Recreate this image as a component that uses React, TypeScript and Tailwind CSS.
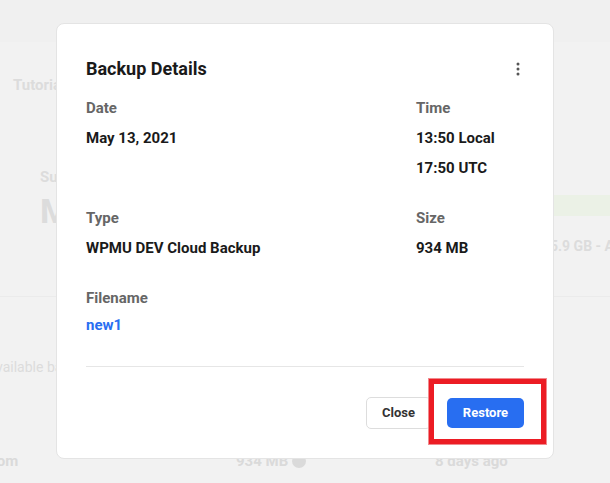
import React from "react";

const faint = "text-[#dcdcdc]";

function BackgroundPage() {
  return (
    <div className="flex flex-col w-full h-full">
      <div className="h-[42px] bg-[#f0f0f0] shrink-0" />
      <div className={`pl-[13px] mt-[33px] text-[15px] font-bold leading-[20px] ${faint}`}>Tutorials</div>
      <div className="flex mt-[72px]">
        <div className="pl-[40px] w-[554px] shrink-0">
          <div className={`text-[15px] font-bold leading-[20px] ${faint}`}>Summary</div>
          <div className={`text-[34px] font-bold leading-[40px] mt-[4px] ${faint}`}>May</div>
        </div>
        <div className="flex flex-col pt-[28px]">
          <div className="h-[21px] w-[60px] bg-[#ebf1e6]" />
          <div className={`mt-[20px] -ml-[4px] text-[14px] font-bold leading-[20px] whitespace-nowrap ${faint}`}>5.9 GB - Available</div>
        </div>
      </div>
      <div className="mt-[40px] h-px bg-[#ebebeb]" />
      <div className={`mt-[60px] -ml-[4px] text-[14px] leading-[20px] whitespace-nowrap ${faint}`}>vailable backups</div>
      <div className="grid grid-cols-[236px_199px_1fr] mt-[74px] text-[15px] font-bold leading-[20px] text-[#dadada]">
        <div className="-ml-[11px]">com</div>
        <div className="flex items-center gap-[4px]">
          934 MB
          <span className="w-[14px] h-[14px] rounded-full bg-[#dadada]" />
        </div>
        <div>8 days ago</div>
      </div>
    </div>
  );
}

function Field({ label, children }: { label: string; children: React.ReactNode }) {
  return (
    <div className="flex flex-col">
      <div className="text-[15px] font-bold leading-[20px] text-[#666666]">{label}</div>
      <div className="mt-[10px] flex flex-col gap-[10px] text-[15px] font-bold leading-[20px] text-[#1a1a1a]">
        {children}
      </div>
    </div>
  );
}

export default function App() {
  return (
    <div
      className="relative w-[610px] h-[483px] overflow-hidden bg-[#f2f2f2]"
      style={{ fontFamily: "Roboto, 'Noto Sans', sans-serif" }}
    >
      <BackgroundPage />

      {/* Modal */}
      <div className="absolute left-[56px] top-[23px] w-[498px] h-[436px] bg-white rounded-[8px] border border-[#e4e4e4] px-[29px] pt-[33px] pb-[29px] flex flex-col">
        <div className="flex items-center justify-between">
          <h2 className="text-[18px] font-bold leading-[24px] text-[#1a1a1a]">Backup Details</h2>
          <button type="button" className="w-[16px] h-[24px] flex items-center justify-center -mr-[2px]">
            <svg width="4" height="14" viewBox="0 0 4 14">
              <circle cx="2" cy="2" r="1.5" fill="#555" />
              <circle cx="2" cy="7" r="1.5" fill="#555" />
              <circle cx="2" cy="12" r="1.5" fill="#555" />
            </svg>
          </button>
        </div>

        <div className="grid grid-cols-[330px_1fr] gap-y-[30px] mt-[17px]">
          <Field label="Date">
            <div>May 13, 2021</div>
          </Field>
          <Field label="Time">
            <div>13:50 Local</div>
            <div>17:50 UTC</div>
          </Field>
          <Field label="Type">
            <div>WPMU DEV Cloud Backup</div>
          </Field>
          <Field label="Size">
            <div>934 MB</div>
          </Field>
          <div className="flex flex-col">
            <div className="text-[15px] font-bold leading-[20px] text-[#666666]">Filename</div>
            <a className="mt-[7px] text-[15px] font-bold leading-[20px] text-[#286ef1]">new1</a>
          </div>
        </div>

        <div className="mt-[31px] h-px bg-[#e6e6e6]" />

        <div className="mt-[30px] flex items-center justify-end gap-[16px]">
          <button
            type="button"
            className="h-[32px] w-[65px] rounded-[5px] border border-[#dddddd] bg-white text-[13px] font-bold text-[#333333]"
          >
            Close
          </button>
          <button
            type="button"
            className="h-[30px] w-[77px] rounded-[5px] bg-[#286ef1] text-[13px] font-bold text-white"
          >
            Restore
          </button>
        </div>
      </div>

      {/* Highlight box */}
      <div className="absolute left-[429px] top-[379px] w-[117px] h-[65px] border-[5px] border-[#ec1c24] outline outline-1 outline-[#f08a8e]" />
    </div>
  );
}
